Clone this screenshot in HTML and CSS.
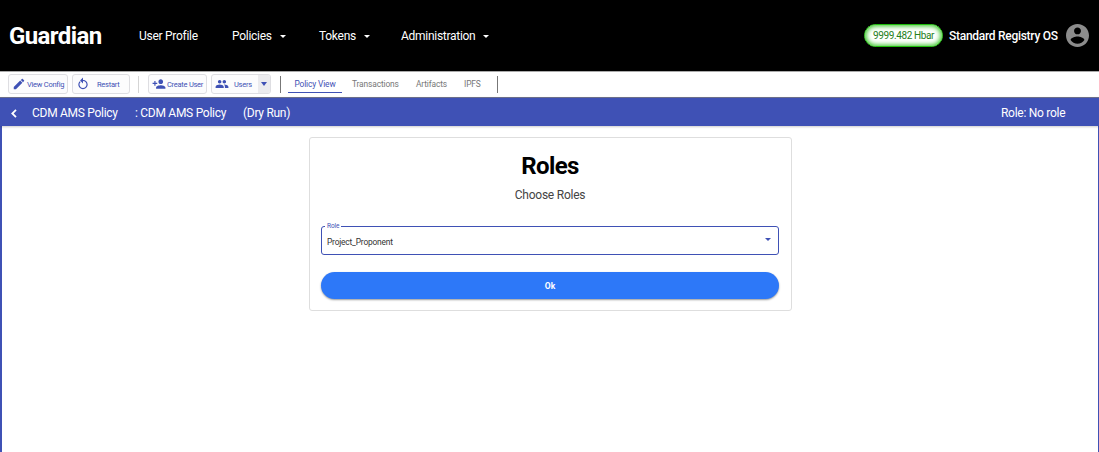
FILE: index.html
```html
<!DOCTYPE html>
<html lang="en">
<head>
<meta charset="utf-8">
<title>Guardian</title>
<link rel="stylesheet" href="styles.css">
</head>
<body>
<header class="header">
  <div class="logo">Guardian</div>
  <nav class="nav">
    <a class="nav-item nav-profile">User Profile</a>
    <a class="nav-item nav-policies">Policies<i class="caret"></i></a>
    <a class="nav-item nav-tokens">Tokens<i class="caret"></i></a>
    <a class="nav-item nav-admin">Administration<i class="caret"></i></a>
  </nav>
  <div class="balance">9999.482 Hbar</div>
  <div class="account">Standard Registry OS</div>
  <svg class="avatar" viewBox="2 2 20 20"><path d="M12 2C6.480 2 2 6.480 2 12s4.480 10 10 10 10-4.480 10-10S17.520 2 12 2zm0 3c1.660 0 3 1.340 3 3s-1.340 3-3 3-3-1.340-3-3 1.340-3 3-3zm0 14.200c-2.500 0-4.710-1.280-6-3.220.03-1.990 4-3.080 6-3.080 1.990 0 5.970 1.090 6 3.080-1.290 1.940-3.500 3.220-6 3.220z"/></svg>
</header>
<div class="toolbar">
  <button class="tool tool-config"><svg class="icon" viewBox="0 0 24 24"><path d="M3 17.250V21h3.750L17.810 9.940l-3.750-3.750L3 17.250zM20.710 7.040c.39-.39.39-1.020 0-1.410l-2.340-2.340c-.39-.39-1.020-.39-1.410 0l-1.830 1.830 3.750 3.750 1.830-1.830z"/></svg><span>View Config</span></button>
  <button class="tool tool-restart"><svg class="icon" viewBox="0 0 24 24"><path d="M12 5V1L7 6l5 5V7c3.310 0 6 2.690 6 6s-2.690 6-6 6-6-2.690-6-6c0-1.800.8-3.400 2-4.500L6.600 7.100C5 8.500 4 10.600 4 13c0 4.420 3.580 8 8 8s8-3.580 8-8-3.580-8-8-8z"/></svg><span>Restart</span></button>
  <i class="divider divider-light"></i>
  <button class="tool tool-create"><svg class="icon" viewBox="0 0 24 24"><path d="M15 12c2.210 0 4-1.790 4-4s-1.790-4-4-4-4 1.790-4 4 1.790 4 4 4zm-9-2V7H4v3H1v2h3v3h2v-3h3v-2H6zm9 4c-2.670 0-8 1.340-8 4v2h16v-2c0-2.660-5.330-4-8-4z"/></svg><span>Create User</span></button>
  <button class="tool tool-users"><svg class="icon" viewBox="0 0 24 24"><path d="M16 11c1.660 0 2.990-1.340 2.990-3S17.660 5 16 5s-3 1.340-3 3 1.340 3 3 3zm-8 0c1.660 0 2.990-1.340 2.990-3S9.660 5 8 5 5 6.340 5 8s1.340 3 3 3zm0 2c-2.330 0-7 1.170-7 3.500V19h14v-2.500C15 14.170 10.330 13 8 13zm8 0c-.29 0-.62.020-.97.050 1.160.84 1.970 1.970 1.970 3.450V19h6v-2.500c0-2.330-4.670-3.500-7-3.500z"/></svg><span>Users</span><span class="split"><i class="caret"></i></span></button>
  <i class="divider divider-start"></i>
  <nav class="tabs">
    <a class="tab tab-active">Policy View</a>
    <a class="tab tab-transactions">Transactions</a>
    <a class="tab tab-artifacts">Artifacts</a>
    <a class="tab tab-ipfs">IPFS</a>
  </nav>
  <i class="divider divider-end"></i>
</div>
<div class="policy-bar">
  <svg class="back" viewBox="0 0 6 9"><path d="M5 .8 1.300 4.500 5 8.200"/></svg>
  <span class="policy-name">CDM AMS Policy</span>
  <span class="policy-topic">: CDM AMS Policy</span>
  <span class="policy-status">(Dry Run)</span>
  <span class="policy-role">Role: No role</span>
</div>
<main class="content">
  <section class="card">
    <h1 class="title">Roles</h1>
    <p class="subtitle">Choose Roles</p>
    <fieldset class="field">
      <legend class="field-label">Role</legend>
      <div class="field-row"><span>Project_Proponent</span><i class="caret"></i></div>
    </fieldset>
    <button class="submit">Ok</button>
  </section>
</main>
</body>
</html>
```
FILE: styles.css
```css
* { box-sizing: border-box; }
body { margin: 0; height: 452px; display: flex; flex-direction: column; overflow: hidden; background: #fff; font-family: Roboto, sans-serif; }
button { font-family: inherit; }
span, a, .logo, .account, .balance { white-space: nowrap; }
.caret { width: 0; height: 0; border: 3px solid transparent; border-top-color: currentColor; border-bottom: 0; flex: none; }

.header { height: 71px; flex: none; display: flex; align-items: center; background: #000; color: #fff; padding: 0 10px 0 9px; }
.logo { width: 130px; font-size: 24px; font-weight: 700; letter-spacing: -0.600px; }
.nav { display: flex; flex: 1; font-size: 12px; letter-spacing: -0.280px; }
.nav-item { display: flex; align-items: center; gap: 8px; }
.nav-item .caret { margin-top: 2px; }
.nav-profile { width: 93px; }
.nav-policies { width: 87px; }
.nav-tokens { width: 82px; }
.balance { width: 79px; height: 23px; border: 1px solid #1fbd0c; border-radius: 12px; background: #fff; box-shadow: inset 0 0 5px 1px #2cc01a; color: #25801a; font-size: 10px; letter-spacing: -0.380px; line-height: 21px; text-align: center; }
.account { width: 110px; margin: 0 7px 0 6px; font-size: 12px; font-weight: 500; letter-spacing: -0.280px; }
.avatar { width: 23px; height: 23px; fill: #8c8c8c; }

.toolbar { height: 26px; flex: none; display: flex; align-items: center; padding-left: 8px; border-top: 1px solid #aaa; color: #3f51b5; }
.tool { height: 20px; display: flex; align-items: center; padding: 0; border: 1px solid #dedee2; border-radius: 3px; background: #fcfcfd; color: #3f51b5; font-size: 7.500px; letter-spacing: -0.260px; margin-bottom: 1px; }
.tool-config { width: 60px; margin-right: 4px; padding-left: 3px; gap: 1px; }
.tool-restart { width: 58px; margin-right: 8px; padding-left: 3px; gap: 7px; }
.tool-create { width: 59px; margin: 0 4px 1px 9px; padding-left: 3px; gap: 1px; }
.tool-users { width: 60px; padding-left: 3px; gap: 5px; overflow: hidden; }
.icon { width: 14px; height: 14px; flex: none; fill: #3f51b5; }
.split { width: 12px; height: 18px; margin-left: auto; display: flex; align-items: center; justify-content: center; background: #ebebee; }
.split .caret { border-width: 4px 3px 0; }
.divider { width: 1px; height: 17px; background: #777; }
.divider-light { background: #d5d5d5; }
.divider-start { margin: 0 7px 0 9px; }
.tabs { display: flex; height: 17px; font-size: 8.400px; letter-spacing: -0.130px; line-height: 16px; color: #777; }
.tab-active { width: 54px; margin-right: 10px; text-align: center; color: #3f51b5; border-bottom: 1px solid #3f51b5; }
.tab-transactions { width: 64px; }
.tab-artifacts { width: 48px; }
.tab-ipfs { width: 33px; }

.policy-bar { height: 29px; flex: none; display: flex; align-items: center; padding: 2px 0 0 11px; border-top: 1px solid #6b6f8a; background: #3f51b5; color: #fff; font-size: 12px; letter-spacing: -0.280px; box-shadow: 0 1px 2px #0003; z-index: 1; }
.back { width: 6px; height: 9px; margin-right: 15px; fill: none; stroke: #fff; stroke-width: 1.800; }
.policy-name { width: 103px; }
.policy-topic { width: 108px; }
.policy-status { flex: 1; }
.policy-role { width: 98px; }

.content { flex: 1; padding-top: 11px; border: solid #3f51b5; border-width: 0 1px 0 2px; }
.card { width: 483px; height: 174px; margin-left: 307px; padding: 0 12px 0 11px; display: flex; flex-direction: column; border: 1px solid #dedede; border-radius: 3px; }
.title { margin: 14px 0 0; font-size: 24px; line-height: 28px; text-align: center; color: #000; letter-spacing: -0.650px; }
.subtitle { margin: 7px 0 0; font-size: 12px; letter-spacing: -0.230px; line-height: 16px; text-align: center; color: #444; }
.field { height: 32px; margin: 20px 0 0; padding: 0 7px 0 3px; border: 1px solid #3f51b5; border-radius: 3px; color: #333; }
.field-label { height: 6px; padding: 0 2px; font-size: 6.500px; letter-spacing: -0.100px; line-height: 6px; color: #3f51b5; }
.field-row { display: flex; justify-content: space-between; padding: 6px 0 0 2px; font-size: 8.400px; letter-spacing: -0.180px; line-height: 14px; }
.field-row .caret { margin-top: 3px; color: #3f51b5; }
.submit { height: 27px; margin: 17px 0 0; border: 0; border-radius: 14px; background: #2d78f8; color: #fff; font-size: 8.500px; font-weight: 700; box-shadow: 0 1px 2px #0006; }
```
